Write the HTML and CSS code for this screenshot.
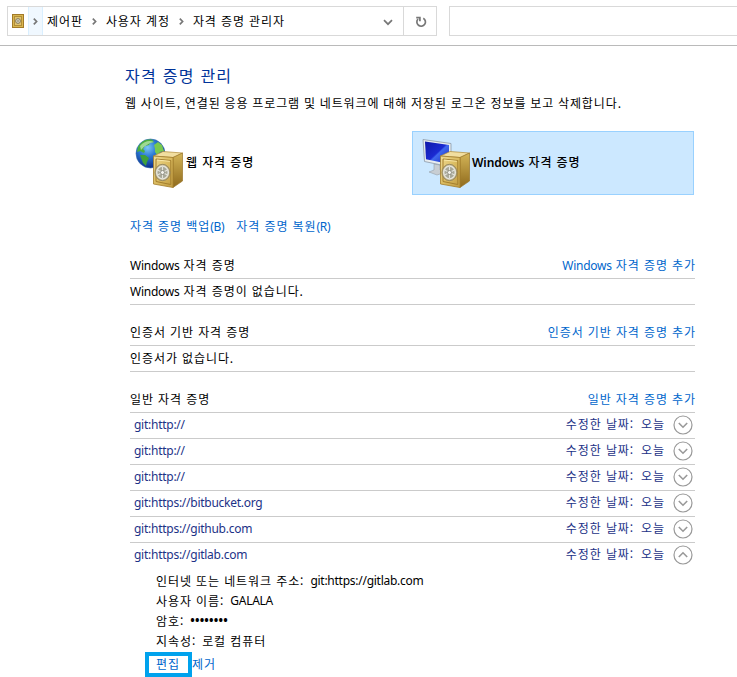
FILE: index.html
```html
<!DOCTYPE html>
<html lang="ko">
<head>
<meta charset="utf-8">
<title>자격 증명 관리자</title>
<link rel="stylesheet" href="styles.css">
</head>
<body>
<svg class="defs" width="0" height="0" aria-hidden="true">
  <defs>
    <linearGradient id="gold" x1="0" y1="0" x2="1" y2="1"><stop offset="0" stop-color="#f0dc94"/><stop offset=".5" stop-color="#dabb60"/><stop offset="1" stop-color="#c09b42"/></linearGradient>
    <linearGradient id="side" x1="0" y1="0" x2="0" y2="1"><stop offset="0" stop-color="#d4b558"/><stop offset="1" stop-color="#8f6a1c"/></linearGradient>
    <radialGradient id="sea" cx=".4" cy=".3" r=".7"><stop offset="0" stop-color="#7cc8f5"/><stop offset=".45" stop-color="#2a78d2"/><stop offset="1" stop-color="#0c2c8c"/></radialGradient>
    <linearGradient id="screen" x1="0" y1="0" x2="1" y2="1"><stop offset="0" stop-color="#1018a8"/><stop offset=".5" stop-color="#1a2ad2"/><stop offset=".55" stop-color="#3f68ee"/><stop offset="1" stop-color="#1522b8"/></linearGradient>
    <g id="safe">
      <path d="M18.500 18 28 13.500 47.500 15 38 19.500Z" fill="#f1dea0" stroke="#b08a35" stroke-width=".7"/>
      <path d="M38 19.500 47.500 15V43L38 49.500Z" fill="url(#side)" stroke="#9a752a" stroke-width=".7"/>
      <path d="M18.500 18 38 19.500V49.500L18.500 46Z" fill="url(#gold)" stroke="#a37d2b" stroke-width=".8"/>
      <path d="M21 21 35.800 22.500V46.500L21 43.500Z" fill="none" stroke="#a47f2e" stroke-width="1"/>
      <path d="M22 22 34.800 23.300" stroke="#fff1b5" stroke-width=".8"/>
      <ellipse cx="27.500" cy="34.500" rx="7.600" ry="8.200" fill="#b9a878" stroke="#8d815f" stroke-width=".8"/>
      <ellipse cx="27.500" cy="34.500" rx="5.800" ry="6.400" fill="#a8a898" stroke="#e4e4dc" stroke-width="1.500"/>
      <path d="M27.500 29v11M22.500 32l10 5M22.500 37l10-5" stroke="#e4e4dc" stroke-width="1.100"/>
      <circle cx="27.500" cy="34.500" r="2" fill="#f4f4ee" stroke="#77776b" stroke-width=".7"/>
    </g>
  </defs>
</svg>

<header class="toolbar">
  <nav class="address">
    <svg class="vault" width="12" height="14" viewBox="0 0 12 14"><rect x=".5" y=".5" width="11" height="13" fill="#d8b64f" stroke="#a27a28"/><rect x="2.500" y="2.500" width="7" height="9" fill="#e0c46e" stroke="#b28d38"/><circle cx="6" cy="7" r="2.400" fill="#ddd9c3" stroke="#85795a"/><circle cx="6" cy="7" r=".8" fill="#746a4d"/></svg>
    <span class="sep hot"><svg width="5" height="7" viewBox="0 0 5 7"><path d="M.8.7 3.600 3.500.8 6.300"/></svg></span>
    <span class="crumb">제어판</span>
    <span class="sep"><svg width="5" height="7" viewBox="0 0 5 7"><path d="M.8.7 3.600 3.500.8 6.300"/></svg></span>
    <span class="crumb">사용자 계정</span>
    <span class="sep"><svg width="5" height="7" viewBox="0 0 5 7"><path d="M.8.7 3.600 3.500.8 6.300"/></svg></span>
    <span class="crumb">자격 증명 관리자</span>
    <svg class="drop" width="10" height="7" viewBox="0 0 10 7"><path d="M1 1.200 5 5.200 9 1.200"/></svg>
    <span class="refresh"><svg width="12" height="12" viewBox="0 0 12 12"><path d="M8.300 2.200A4.300 4.300 0 1 1 3 3" /><path d="M1.200 1.600H4.900V5.300"/></svg></span>
  </nav>
  <div class="search"></div>
</header>

<main class="page">
  <h1>자격 증명 관리</h1>
  <p class="intro">웹 사이트, 연결된 응용 프로그램 및 네트워크에 대해 저장된 로그온 정보를 보고 삭제합니다.</p>

  <div class="vaults">
    <div class="card">
      <svg width="49" height="51" viewBox="0 0 49 51"><circle cx="15.500" cy="15.500" r="14.500" fill="url(#sea)" stroke="#356fae" stroke-width=".6"/><path d="M3 9C7 2 12 1 17 1.500L19 4 15 5 14 7 10 8 8 11 10 13 9 15 5 13 2 14Z" fill="#4caf3d"/><path d="M5 17 10 17 14 20 12 24 11 28 8 25Z" fill="#3fa03a"/><path d="M19 7 23 4 27 7 29 13 25 14 23 18 20 14 20 11Z" fill="#78c94e"/><path d="M5 8C9 3 15 2 19 4 14 5 9 8 6 12Z" fill="#d6f5cf" opacity=".6"/><use href="#safe"/></svg>
      <span>웹 자격 증명</span>
    </div>
    <div class="card selected">
      <svg width="49" height="51" viewBox="0 0 49 51"><path d="M12 26 18 27V32L24 34 15 37 7 34 12 32Z" fill="#c8ced3" stroke="#969fa8" stroke-width=".6"/><path d="M1 1.500 29 5.500V29L2.500 23.500Z" fill="#e7ecef" stroke="#8c99a8" stroke-width=".8"/><path d="M3 3.500 27 7V26L4 21.300Z" fill="url(#screen)"/><use href="#safe"/></svg>
      <span><b class="en">Windows</b> 자격 증명</span>
    </div>
  </div>

  <div class="actions"><a>자격 증명 백업<i class="en">(B)</i></a><a>자격 증명 복원<i class="en">(R)</i></a></div>

  <section>
    <div class="row"><span><i class="en">Windows</i> 자격 증명</span><a><i class="en">Windows</i> 자격 증명 추가</a></div>
    <div class="row"><span><i class="en">Windows</i> 자격 증명이 없습니다.</span></div>
  </section>
  <section class="raised">
    <div class="row"><span>인증서 기반 자격 증명</span><a>인증서 기반 자격 증명 추가</a></div>
    <div class="row"><span>인증서가 없습니다.</span></div>
  </section>
  <section class="raised">
    <div class="row"><span>일반 자격 증명</span><a>일반 자격 증명 추가</a></div>
    <div class="row item"><i class="en">git:http://</i><span class="date">수정한 날짜:<em>오늘</em></span><svg class="toggle" width="20" height="20" viewBox="0 0 20 20"><circle cx="10" cy="10" r="9"/><path d="M5.800 8 10 12.200 14.200 8"/></svg></div>
    <div class="row item"><i class="en">git:http://</i><span class="date">수정한 날짜:<em>오늘</em></span><svg class="toggle" width="20" height="20" viewBox="0 0 20 20"><circle cx="10" cy="10" r="9"/><path d="M5.800 8 10 12.200 14.200 8"/></svg></div>
    <div class="row item"><i class="en">git:http://</i><span class="date">수정한 날짜:<em>오늘</em></span><svg class="toggle" width="20" height="20" viewBox="0 0 20 20"><circle cx="10" cy="10" r="9"/><path d="M5.800 8 10 12.200 14.200 8"/></svg></div>
    <div class="row item"><i class="en">git:https://bitbucket.org</i><span class="date">수정한 날짜:<em>오늘</em></span><svg class="toggle" width="20" height="20" viewBox="0 0 20 20"><circle cx="10" cy="10" r="9"/><path d="M5.800 8 10 12.200 14.200 8"/></svg></div>
    <div class="row item"><i class="en">git:https://github.com</i><span class="date">수정한 날짜:<em>오늘</em></span><svg class="toggle" width="20" height="20" viewBox="0 0 20 20"><circle cx="10" cy="10" r="9"/><path d="M5.800 8 10 12.200 14.200 8"/></svg></div>
    <div class="row item open"><i class="en">git:https://gitlab.com</i><span class="date">수정한 날짜:<em>오늘</em></span><svg class="toggle" width="20" height="20" viewBox="0 0 20 20"><circle cx="10" cy="10" r="9"/><path d="M5.800 12 10 7.800 14.200 12"/></svg></div>
    <dl class="details">
      <div><dt>인터넷 또는 네트워크 주소:</dt><dd class="en">git:https://gitlab.com</dd></div>
      <div><dt>사용자 이름:</dt><dd class="en">GALALA</dd></div>
      <div><dt>암호:</dt><dd class="dots">••••••••</dd></div>
      <div><dt>지속성:</dt><dd>로컬 컴퓨터</dd></div>
    </dl>
    <div class="commands"><a class="edit">편집</a><a>제거</a></div>
  </section>
</main>
</body>
</html>
```
FILE: styles.css
```css
* { box-sizing: border-box; }
body {
  margin: 0;
  height: 677px;
  overflow: hidden;
  background: #fff;
  color: #000;
  font: 12px/20px "Noto Sans CJK KR", sans-serif;
  letter-spacing: .92px;
  word-spacing: -.1px;
  white-space: nowrap;
}
.defs { position: absolute; }
svg { display: block; flex: none; }
i, em { font-style: normal; }
.en {
  font-family: "Noto Sans", sans-serif;
  letter-spacing: -.26px;
}

.toolbar {
  display: flex;
  gap: 12px;
  height: 46px;
  padding: 6px 0 0 7px;
  border-bottom: 1px solid #bababa;
}
.address {
  display: flex;
  align-items: center;
  width: 430px;
  height: 30px;
  border: 1px solid #d9d9d9;
}
.crumb { padding-bottom: 1px; }
.search {
  flex: 1;
  height: 30px;
  border: 1px solid #d9d9d9;
  border-right: 0;
}
.vault { margin: 0 4px; }
.address path { fill: none; stroke: #777; stroke-width: 1.7; }
.sep {
  display: flex;
  align-items: center;
  justify-content: center;
  width: 23px;
  height: 28px;
  padding-top: 1px;
}
.sep.hot {
  width: 15px;
  margin-right: 4px;
  background: #f0f8ff;
  border: solid #d9efff;
  border-width: 0 1px;
}
.drop { margin: 2px 10px 0 auto; }
.refresh {
  display: flex;
  align-items: center;
  justify-content: center;
  width: 33px;
  height: 28px;
  padding: 1px 0 0 2px;
  border-left: 1px solid #d9d9d9;
}

.page { width: 695px; padding: 17px 0 0 125px; }
h1 {
  margin: 0;
  color: #039;
  font-size: 16px;
  font-weight: 400;
  line-height: 24px;
  letter-spacing: 1.2px;
  word-spacing: .2px;
}
.intro { margin: 6px 0 18px; word-spacing: -.45px; }
.vaults { display: flex; gap: 5px; }
.card {
  display: flex;
  align-items: center;
  gap: 2px;
  width: 282px;
  height: 64px;
  padding-left: 9px;
  border: 1px solid transparent;
  font-weight: 500;
}
.card span { padding-bottom: 2px; }
.card.selected { gap: 1px; }
.card .en { font-weight: 600; letter-spacing: -.1px; }
.selected { background: #cce8ff; border-color: #99d1ff; }
a { color: #0066cc; }
.actions {
  display: flex;
  gap: 12px;
  height: 20px;
  margin: 21px 0 17px 5px;
}
section { margin: 0 0 15px 5px; }
.row {
  display: flex;
  align-items: center;
  justify-content: space-between;
  height: 26px;
  border-bottom: 1px solid #cbcbcb;
}
.row > a { margin-right: -1px; }
.raised .row { padding-bottom: 2px; }
.item {
  padding: 0 2px 0 4px;
  color: #1c3287;
}
.item.open { border-color: transparent; }
.date { margin-left: auto; padding-bottom: 1px; }
.date em { margin-left: 7px; }
.toggle { margin: 1px 0 0 8px; }
.toggle circle { fill: #fff; stroke: #999; stroke-width: 1.2; }
.toggle path { fill: none; stroke: #999; stroke-width: 1.6; }
.details { margin: 2px 0 0 26px; }
.details div { display: flex; height: 20px; }
dd { margin: 0 0 0 6px; }
.dots {
  font-family: "Noto Sans", sans-serif;
  font-weight: 700;
  letter-spacing: .2px;
}
.commands {
  display: flex;
  align-items: center;
  height: 25px;
  margin: 1px 0 0 15px;
}
.commands a { padding-bottom: 1px; }
.commands .edit {
  width: 47px;
  height: 25px;
  padding-left: 7px;
  border: 4px solid #00a2ed;
  line-height: 16px;
}
```
